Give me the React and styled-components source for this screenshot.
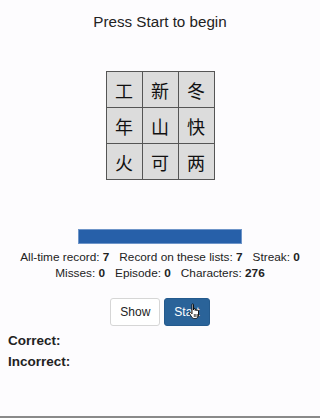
import React from "react";
import styled, { createGlobalStyle } from "styled-components";

const Global = createGlobalStyle`
  html, body { margin: 0; padding: 0; background: #fdfcfe; }
  body { font-family: "Liberation Sans", Arial, sans-serif; color: #333; }
`;

const Page = styled.div`
  box-sizing: border-box;
  height: 418px;
  border-bottom: 2px solid #8a8a8a;
  display: flex;
  flex-direction: column;
`;

const Title = styled.h1`
  margin: 13px 0 0;
  font-size: 15.2px;
  font-weight: normal;
  line-height: 18px;
  text-align: center;
  color: #222;
`;

const Board = styled.table`
  margin: 40px auto 0;
  border-collapse: collapse;
  border: 1px solid #555;
`;

const Cell = styled.td`
  width: 35px;
  height: 35px;
  padding: 0;
  border: 1px solid #555;
  background: #dcdcdc;
  text-align: center;
  vertical-align: middle;
  font-family: "Noto Sans CJK SC", "Noto Sans CJK JP", sans-serif;
  font-size: 18px;
  color: #111;
`;

const Progress = styled.div`
  box-sizing: border-box;
  margin: 49px auto 0;
  width: 164px;
  height: 15px;
  background: #2760a9;
  border: 1px solid #6e95c9;
`;

const Stats = styled.div`
  margin-top: 5px;
  display: flex;
  flex-direction: column;
  align-items: center;
  font-size: 11.8px;
  line-height: 16px;
  color: #222;
`;

const StatRow = styled.div`
  display: flex;
  gap: 10px;
`;

const Stat = styled.span`
  b { font-weight: bold; }
`;

const Buttons = styled.div`
  margin-top: 17px;
  display: flex;
  justify-content: center;
  gap: 4px;
`;

const Button = styled.button`
  position: relative;
  box-sizing: border-box;
  height: 28px;
  padding: 0 9px;
  font-family: "Liberation Sans", Arial, sans-serif;
  font-size: 12px;
  border-radius: 3px;
  border: 1px solid ${(p) => (p.$primary ? "#245a8d" : "#d6d6d6")};
  background: ${(p) => (p.$primary ? "#2a6399" : "#fff")};
  color: ${(p) => (p.$primary ? "#fff" : "#222")};
`;

const Cursor = styled.svg`
  position: absolute;
  left: 23px;
  top: 4px;
`;

const Results = styled.div`
  margin: 7px 0 0 8px;
  display: flex;
  flex-direction: column;
  gap: 5px;
  font-size: 13.5px;
  font-weight: bold;
  line-height: 16px;
  color: #222;
`;

const chars = [
  ["工", "新", "冬"],
  ["年", "山", "快"],
  ["火", "可", "两"],
];

export default function App() {
  return (
    <Page>
      <Global />
      <Title>Press Start to begin</Title>
      <Board>
        <tbody>
          {chars.map((row, i) => (
            <tr key={i}>
              {row.map((c) => (
                <Cell key={c}>{c}</Cell>
              ))}
            </tr>
          ))}
        </tbody>
      </Board>
      <Progress />
      <Stats>
        <StatRow>
          <Stat>All-time record: <b>7</b></Stat>
          <Stat>Record on these lists: <b>7</b></Stat>
          <Stat>Streak: <b>0</b></Stat>
        </StatRow>
        <StatRow>
          <Stat>Misses: <b>0</b></Stat>
          <Stat>Episode: <b>0</b></Stat>
          <Stat>Characters: <b>276</b></Stat>
        </StatRow>
      </Stats>
      <Buttons>
        <Button>Show</Button>
        <Button $primary>
          Start
          <Cursor width="14" height="17" viewBox="0 0 14 17">
            <path
              d="M4 1.5c0-.8 1.5-.8 1.5 0V7l.2-1c.3-.8 1.5-.7 1.5.2V7.5l.2-.8c.3-.8 1.5-.6 1.5.2v1l.2-.5c.3-.7 1.4-.5 1.4.3V12c0 2-1.2 3.5-3.2 3.5H6.3c-1.2 0-2-.6-2.7-1.6L1.3 10.3c-.5-.8.6-1.6 1.3-.9L4 10.8V1.5z"
              fill="#fff"
              stroke="#000"
              strokeWidth="0.9"
            />
            <path d="M6.3 11v3M7.8 11v3M9.3 11v3" stroke="#000" strokeWidth="0.7" />
          </Cursor>
        </Button>
      </Buttons>
      <Results>
        <div>Correct:</div>
        <div>Incorrect:</div>
      </Results>
    </Page>
  );
}
